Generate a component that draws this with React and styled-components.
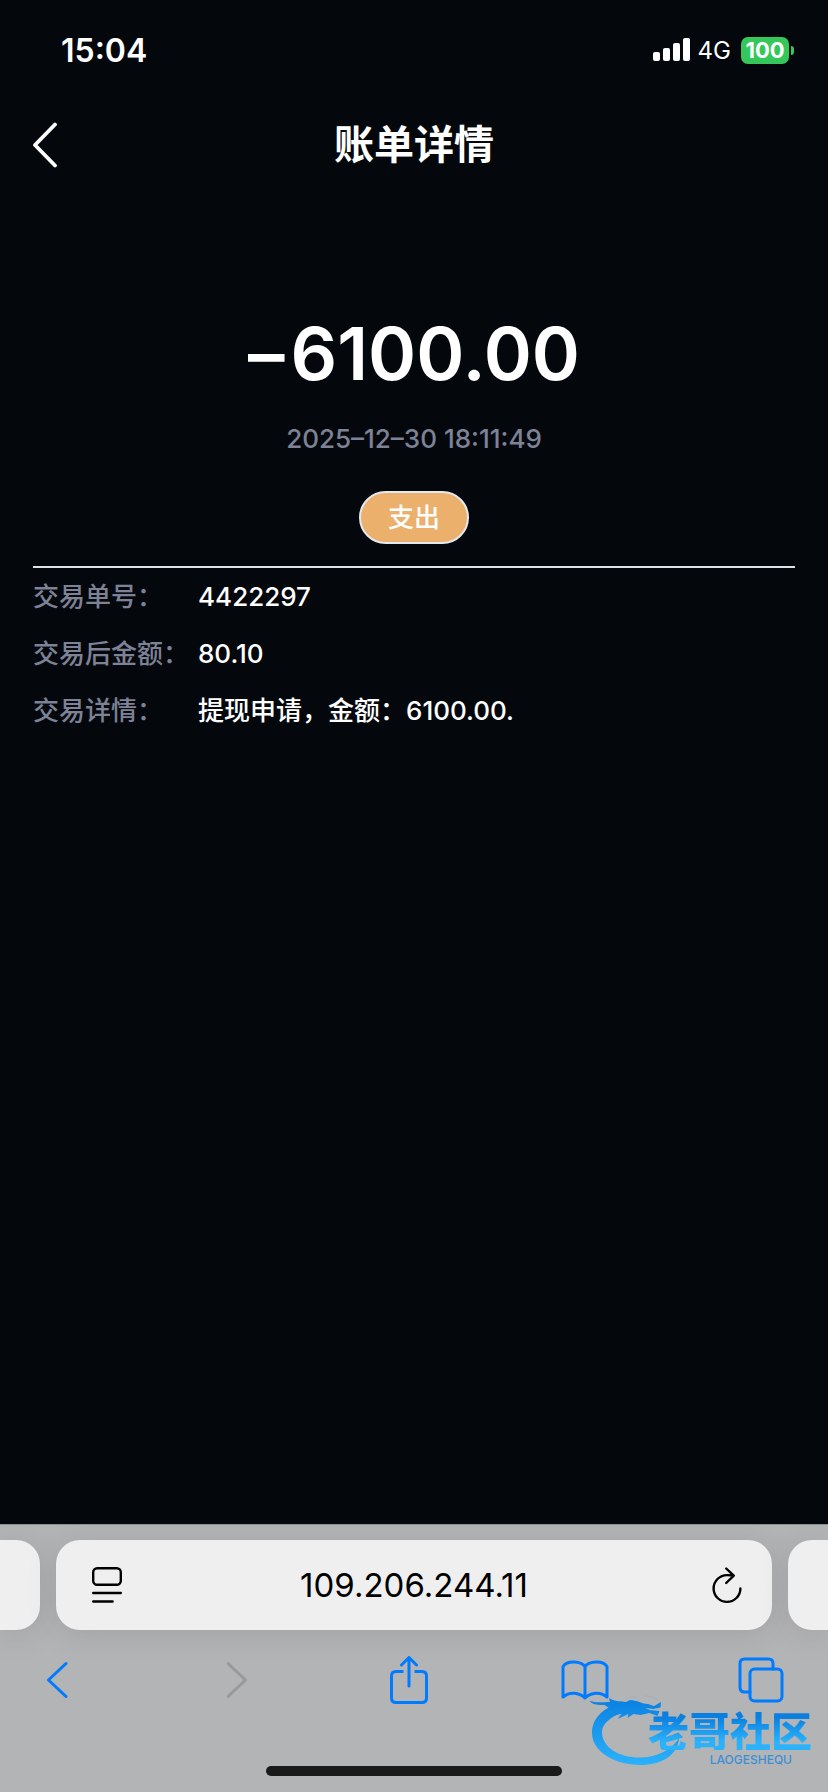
import React, { useState } from "react";
import styled, { createGlobalStyle } from "styled-components";

const details = [
  { label: "交易单号：", value: "4422297" },
  { label: "交易后金额：", value: "80.10" },
  { label: "交易详情：", value: "提现申请，金额：6100.00." },
];

//icons
const SignalIcon = () => (
  <svg width="37" height="24" viewBox="0 0 37 24" fill="#fff" aria-hidden="true">
    <rect x="0" y="14" width="7" height="9" rx="2" />
    <rect x="10" y="10" width="7" height="13" rx="2" />
    <rect x="20" y="5" width="7" height="18" rx="2" />
    <rect x="30" y="0" width="7" height="23" rx="2" />
  </svg>
);

const BackIcon = () => (
  <svg width="26" height="46" viewBox="0 0 26 46" fill="none" aria-hidden="true">
    <path
      d="M23 2.5 3 23l20 20.5"
      stroke="#fff"
      strokeWidth="3.8"
      strokeLinecap="round"
      strokeLinejoin="round"
    />
  </svg>
);

const PageIcon = () => (
  <svg width="30" height="36" viewBox="0 0 30 36" fill="none" stroke="#000" aria-hidden="true">
    <rect x="1.2" y="1.2" width="27.6" height="16.6" rx="4" strokeWidth="2.4" />
    <path d="M1.2 26h27.6M1.2 34.5h19.4" strokeWidth="2.4" strokeLinecap="round" />
  </svg>
);

const ReloadIcon = () => (
  <svg width="30" height="38" viewBox="0 0 30 38" fill="none" aria-hidden="true">
    <path
      d="M28.4 22.5A13.4 13.4 0 1 1 15 9.1q3.500 0 6.600.4M14.200 2.500l7.600 7.200-7.600 7.300"
      stroke="#000"
      strokeWidth="2.4"
      strokeLinecap="round"
      strokeLinejoin="round"
    />
  </svg>
);

const PrevIcon = () => (
  <svg width="22" height="38" viewBox="0 0 22 38" aria-hidden="true">
    <path d="M20 2.500 2.500 19 20 35.500" />
  </svg>
);

const NextIcon = () => (
  <svg width="30" height="38" viewBox="-8 0 30 38" aria-hidden="true">
    <path d="M2 2.500 19.500 19 2 35.500" />
  </svg>
);

const ShareIcon = () => (
  <svg width="38" height="48" viewBox="0 0 38 48" aria-hidden="true">
    <path
      d="M13.500 15.500H6q-4.500 0-4.500 4.500v22Q1.500 46.500 6 46.500h26q4.500 0 4.500-4.500v-22Q36.500 15.500 32 15.500h-7.500"
      strokeLinecap="butt"
    />
    <path d="M19 30V2M11.500 9 19 1.500 26.500 9" />
  </svg>
);

const BookIcon = () => (
  <svg width="48" height="40" viewBox="0 0 48 40" aria-hidden="true">
    <path d="M24 6.500C20 1 6 0 2 6.500V37c6.500-5.500 16-5 22 1 6-6 15.500-6.500 22-1V6.500C42 0 28 1 24 6.500ZM24 6.500V38" />
  </svg>
);

const TabsIcon = () => (
  <svg width="46" height="46" viewBox="0 0 46 46" aria-hidden="true">
    <rect x="12" y="12" width="32" height="32" rx="4.500" />
    <path d="M12 35H6.500Q2 35 2 30.500v-24Q2 2 6.500 2h24Q35 2 35 6.500V12" />
  </svg>
);

const DragonIcon = () => (
  <svg width="92" height="78" viewBox="8 4 92 78" aria-hidden="true">
    <defs>
      <linearGradient id="dragon" x1="0" y1="12" x2="0" y2="80" gradientUnits="userSpaceOnUse">
        <stop offset="0" stopColor="#087fe0" />
        <stop offset="1" stopColor="#2bb2fb" />
      </linearGradient>
    </defs>
    <g fill="url(#dragon)">
      <path d="M37 19C22 24 12 34 12 48c0 18 22 32 48 32 22 0 38-10 39-27-7 12-23 19.500-39 19.500C38 72.500 22 62 22 47c0-8 9-16 21-19Z" />
      <path d="M10 16c6 2 12 1 20 1l-1-4c6 4 12 3 17 4l4-2c7 0 12 4 18 4l6 2 7-4-.5 5.500-7 1.500-8-1 4 2 10 1-2 5-8-3-9 2-7-1-6 4 1-4-11 5 4-5-8 1-3-6-6-4c-6 0-12 0-15-4Z" />
    </g>
    <path
      d="M46 14q6-4 12-1M64 11q8-1 14 4"
      fill="none"
      stroke="#7fa9cf"
      strokeOpacity="0.4"
    />
  </svg>
);

function StatusBar() {
  return (
    <StatusRow>
      <time>15:04</time>
      <div className="indicators">
        <SignalIcon />
        <span className="network">4G</span>
        <div className="battery">
          <span className="level">100</span>
          <span className="cap" />
        </div>
      </div>
    </StatusRow>
  );
}

function BrowserBar() {
  const [address, setAddress] = useState("109.206.244.11");

  return (
    <Browser>
      <AddressRow>
        <SideTab side="left" />
        <AddressCard>
          <IconButton type="button" aria-label="页面设置">
            <PageIcon />
          </IconButton>
          <input
            type="text"
            aria-label="地址"
            value={address}
            onChange={(e) => setAddress(e.target.value)}
          />
          <IconButton type="button" aria-label="重新载入">
            <ReloadIcon />
          </IconButton>
        </AddressCard>
        <SideTab side="right" />
      </AddressRow>
      <Toolbar>
        <IconButton type="button" aria-label="后退">
          <PrevIcon />
        </IconButton>
        <IconButton type="button" aria-label="前进" disabled>
          <NextIcon />
        </IconButton>
        <IconButton type="button" aria-label="共享">
          <ShareIcon />
        </IconButton>
        <IconButton type="button" aria-label="书签">
          <BookIcon />
        </IconButton>
        <IconButton type="button" aria-label="标签页">
          <TabsIcon />
        </IconButton>
      </Toolbar>
      <HomeIndicator />
      <Watermark>
        <DragonIcon />
        <div className="words">
          <span className="name">老哥社区</span>
          <span className="latin">LAOGESHEQU</span>
        </div>
      </Watermark>
    </Browser>
  );
}

function App() {
  return (
    <Container>
      <GlobalStyle />
      <StatusBar />
      <Header>
        <IconButton type="button" aria-label="返回">
          <BackIcon />
        </IconButton>
        <h1>账单详情</h1>
      </Header>
      <Main>
        <Summary>
          <div className="amount">
            <span>–</span>
            <span>6100.00</span>
          </div>
          <time className="date">2025–12–30 18:11:49</time>
          <span className="badge">支出</span>
        </Summary>
        <Details>
          {details.map((item) => (
            <div className="row" key={item.label}>
              <dt>{item.label}</dt>
              <dd>{item.value}</dd>
            </div>
          ))}
        </Details>
      </Main>
      <BrowserBar />
    </Container>
  );
}

export default App;

const GlobalStyle = createGlobalStyle`
  * {
    box-sizing: border-box;
  }

  body {
    margin: 0;
    background-color: #04080d;
  }

  button,
  input {
    font-family: inherit;
  }
`;

const Container = styled.div`
  min-height: 100vh;
  display: flex;
  flex-direction: column;
  background-color: #04080d;
  color: #fff;
  font-family: Inter, "Noto Sans CJK SC", sans-serif;
`;

const IconButton = styled.button`
  display: flex;
  align-items: center;
  justify-content: center;
  padding: 0;
  border: none;
  background: none;
  cursor: pointer;
`;

const StatusRow = styled.div`
  height: 100px;
  padding: 0 34px 0 61px;
  display: flex;
  align-items: center;
  justify-content: space-between;

  time {
    font-size: 32px;
    font-weight: 600;
  }

  .indicators {
    display: flex;
    align-items: center;
  }

  .network {
    margin: 0 10px 0 8px;
    font-size: 24px;
  }

  .battery {
    display: flex;
    align-items: center;
    gap: 2px;
  }

  .level {
    width: 48px;
    height: 27px;
    border-radius: 7px;
    background-color: #35c759;
    font-size: 22px;
    font-weight: 700;
    line-height: 27px;
    text-align: center;
  }

  .cap {
    width: 3px;
    height: 9px;
    border-radius: 0 4px 4px 0;
    background-color: #35c759;
  }
`;

const Header = styled.header`
  height: 90px;
  padding: 0 32px;
  display: grid;
  grid-template-columns: 26px 1fr 26px;
  align-items: center;

  h1 {
    margin: 0;
    font-size: 40px;
    font-weight: 600;
    line-height: 60px;
    text-align: center;
  }
`;

const Main = styled.main`
  flex: 1;
  padding: 110px 33px 0;
`;

const Summary = styled.section`
  padding-bottom: 22px;
  display: flex;
  flex-direction: column;
  align-items: center;
  border-bottom: 2px solid #dce2ea;

  .amount {
    display: flex;
    gap: 6px;
    font-size: 73px;
    font-weight: 600;
    line-height: 108px;
  }

  .date {
    margin-top: 11px;
    font-size: 26px;
    font-weight: 500;
    line-height: 40px;
    color: #7e8296;
  }

  .badge {
    margin-top: 32px;
    padding: 0 27px;
    border: 2px solid #e4e8ef;
    border-radius: 27px;
    background-color: #ebb06c;
    font-size: 26px;
    font-weight: 500;
    line-height: 49px;
  }
`;

const Details = styled.dl`
  margin: 0;

  .row {
    display: grid;
    grid-template-columns: 165px 1fr;
    font-size: 26px;
    font-weight: 500;
    line-height: 57px;
  }

  dt {
    color: #7e8296;
  }

  dd {
    margin: 0;
  }
`;

const Browser = styled.footer`
  position: relative;
  border-top: 1px solid #8d8e91;
  background-color: #b3b4b6;
  overflow: hidden;
`;

const AddressRow = styled.div`
  padding-top: 15px;
  display: flex;
  gap: 16px;
`;

const SideTab = styled.div`
  width: 40px;
  height: 90px;
  border-radius: ${(props) => (props.side === "left" ? "0 24px 24px 0" : "24px 0 0 24px")};
  background-color: #efeff0;
  box-shadow: 0 4px 32px rgba(0, 0, 0, 0.1);
`;

const AddressCard = styled.div`
  flex: 1;
  min-width: 0;
  height: 90px;
  padding: 0 30px;
  display: flex;
  align-items: center;
  border-radius: 24px;
  background-color: #efeff0;
  box-shadow: 0 4px 32px rgba(0, 0, 0, 0.1);

  button {
    width: 36px;
    justify-content: flex-end;
  }

  input {
    flex: 1;
    min-width: 0;
    padding: 0;
    border: none;
    outline: none;
    background: none;
    color: #000;
    font-size: 33px;
    text-align: center;
  }
`;

const Toolbar = styled.nav`
  height: 100px;
  padding: 0 44px 0 34px;
  display: flex;
  align-items: center;
  justify-content: space-between;

  button {
    width: 46px;
    color: #007aff;
  }

  button:disabled {
    color: #98999b;
  }

  svg {
    flex-shrink: 0;
    fill: none;
    stroke: currentColor;
    stroke-width: 3;
    stroke-linecap: round;
    stroke-linejoin: round;
  }
`;

const HomeIndicator = styled.div`
  width: 296px;
  height: 10px;
  margin: 36px auto 16px;
  border-radius: 5px;
  background-color: #1a1a1a;
`;

const Watermark = styled.div`
  position: absolute;
  right: 16px;
  bottom: 25px;
  display: flex;
  pointer-events: none;

  .words {
    margin: 20px 0 0 -32px;
    display: flex;
    flex-direction: column;
    align-items: flex-end;
    gap: 4px;
  }

  .name {
    background-image: linear-gradient(#0a7fe0 20%, #2bb2fb 80%);
    background-clip: text;
    color: transparent;
    font-family: "Noto Sans CJK SC", sans-serif;
    font-size: 41px;
    font-weight: 900;
    line-height: 41px;
  }

  .latin {
    padding-right: 20px;
    color: #3b8fd6;
    font-size: 12px;
    font-weight: 500;
    line-height: 12px;
  }
`;
